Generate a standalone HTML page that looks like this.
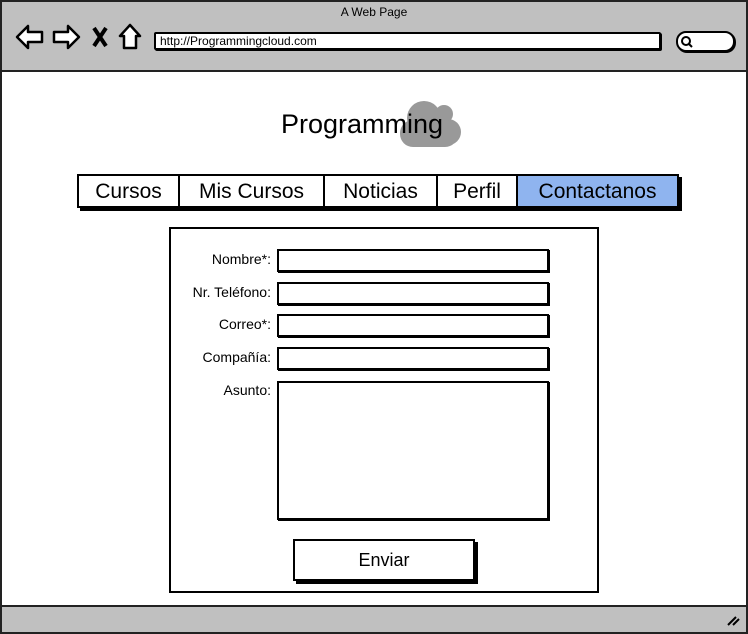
<!DOCTYPE html><html><head><style>
body{margin:0;width:748px;height:634px;position:relative;overflow:hidden;font-family:"Comic Sans MS","Liberation Sans",sans-serif;background:#fff}
.a{position:absolute;box-sizing:border-box}
.in{border:2px solid #000;background:#fff;box-shadow:1px 1px 0 #000}
.lb{font-size:14px;text-align:right;width:120px;left:151px}
.t{position:absolute;top:0;height:100%;line-height:31px;font-size:21px;text-align:center;border-right:2px solid #000;box-sizing:border-box}
</style></head><body>
<div class="a" style="left:0;top:0;width:748px;height:634px;border:2px solid #222"></div>
<div class="a" style="left:2px;top:2px;width:744px;height:70px;background:#c0c0c0;border-bottom:2px solid #222"></div>
<div class="a" style="left:0;top:5px;width:748px;text-align:center;font-size:12px">A Web Page</div>
<svg class="a" style="left:14px;top:22px" width="130" height="30" viewBox="0 0 130 30" fill="#fff" stroke="#000" stroke-width="2.5" stroke-linejoin="round">
<path d="M3 15 L14 4 L14 10 L28 10 L28 20 L14 20 L14 26 Z"/>
<path d="M65 15 L54 4 L54 10 L40 10 L40 20 L54 20 L54 26 Z"/>
<path d="M80 6 L92 24 M92 6 L80 24" stroke-width="4"/>
<path d="M116 3 L106 14 L110 14 L110 26 L122 26 L122 14 L126 14 Z"/>
</svg>
<div class="a in" style="left:154px;top:32px;width:507px;height:18px;font-size:12px;line-height:14px;padding-left:4px;border-radius:2px">http://Programmingcloud.com</div>
<div class="a in" style="left:676px;top:31px;width:59px;height:21px;border-radius:10px"></div>
<svg class="a" style="left:680px;top:35px" width="14" height="14"><circle cx="6" cy="6" r="4" fill="none" stroke="#000" stroke-width="2"/><path d="M9 9 L12 12" stroke="#000" stroke-width="2"/></svg>
<svg class="a" style="left:398px;top:98px" width="66" height="52"><g fill="#999"><circle cx="26" cy="20" r="17"/><circle cx="46" cy="16" r="9"/><circle cx="50" cy="34" r="13"/><rect x="2" y="22" width="58" height="27" rx="13"/></g></svg>
<div class="a" style="left:-12px;top:109px;width:748px;text-align:center;font-size:27px">Programming</div>
<div class="a" style="left:77px;top:174px;width:602px;height:34px;border:2px solid #000;box-shadow:3px 3px 0 #000;background:#fff">
<div class="t" style="left:0;width:101px">Cursos</div>
<div class="t" style="left:101px;width:145px">Mis Cursos</div>
<div class="t" style="left:246px;width:113px">Noticias</div>
<div class="t" style="left:359px;width:80px">Perfil</div>
<div class="t" style="left:439px;width:159px;background:#8fb4ef;border-right:none">Contactanos</div>
</div>
<div class="a" style="left:169px;top:227px;width:430px;height:366px;border:2px solid #000"></div>
<div class="a lb" style="top:251px">Nombre*:</div>
<div class="a lb" style="top:284px">Nr. Teléfono:</div>
<div class="a lb" style="top:316px">Correo*:</div>
<div class="a lb" style="top:349px">Compañía:</div>
<div class="a lb" style="top:382px">Asunto:</div>
<div class="a in" style="left:277px;top:249px;width:272px;height:23px"></div>
<div class="a in" style="left:277px;top:282px;width:272px;height:23px"></div>
<div class="a in" style="left:277px;top:314px;width:272px;height:23px"></div>
<div class="a in" style="left:277px;top:347px;width:272px;height:23px"></div>
<div class="a in" style="left:277px;top:381px;width:272px;height:139px"></div>
<div class="a in" style="left:293px;top:539px;width:182px;height:42px;box-shadow:3px 3px 0 #000;text-align:center;line-height:38px;font-size:18px">Enviar</div>
<div class="a" style="left:2px;top:605px;width:744px;height:27px;background:#c0c0c0;border-top:2px solid #222"></div>
<svg class="a" style="left:726px;top:613px" width="14" height="14"><path d="M2 12 L10 4 M7 12 L13 6" stroke="#000" stroke-width="2"/></svg>
</body></html>
